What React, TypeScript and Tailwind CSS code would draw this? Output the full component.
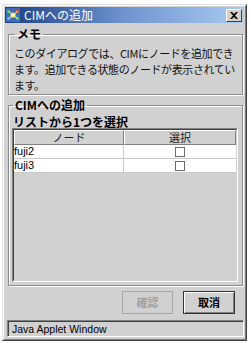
export default function App() {
  const jp = { fontFamily: '"Noto Sans CJK JP", sans-serif' };
  const rows = ["fuji2", "fuji3"];
  const memo = [
    "このダイアログでは、CIMにノードを追加でき",
    "ます。追加できる状態のノードが表示されてい",
    "ます。",
  ];

  return (
    <div className="w-[251px] h-[343px] bg-white overflow-hidden">
      {/* Window frame */}
      <div className="ml-[2px] mt-[4px] w-[245px] h-[337px] bg-[#d1d1d1] border border-t-[#e0e0e0] border-l-[#e0e0e0] border-r-[#404040] border-b-[#404040] flex flex-col">
        <div className="flex-1 flex flex-col border border-t-white border-l-white border-r-[#808080] border-b-[#808080] p-[1px]">
          {/* Title bar */}
          <div className="h-[16px] flex items-center bg-gradient-to-r from-[#1c3f86] via-[#6f94cf] to-[#a9cbf2] pl-[1px] pr-[2px]">
            <svg width="14" height="14" viewBox="0 0 16 16">
              <rect x="0" y="0" width="16" height="16" fill="#3d6bb5" />
              <circle cx="8" cy="8" r="3" fill="#f3e23a" />
              <circle cx="3" cy="4" r="2" fill="#4cc25a" />
              <circle cx="13" cy="4" r="2" fill="#e25a3a" />
              <circle cx="3" cy="12" r="2" fill="#5aa7e8" />
              <circle cx="13" cy="12" r="2" fill="#4cc25a" />
              <path d="M3 4 L8 8 L13 4 M3 12 L8 8 L13 12" stroke="#fff" strokeWidth="1" fill="none" />
            </svg>
            <span className="ml-[4px] text-[12px] leading-none text-white" style={jp}>
              CIMへの追加
            </span>
            <div className="ml-auto w-[16px] h-[13px] bg-[#d4d0c8] border border-t-white border-l-white border-r-[#404040] border-b-[#404040] flex items-center justify-center">
              <svg width="8" height="7" viewBox="0 0 8 7">
                <path d="M0 0 L2 0 L4 2 L6 0 L8 0 L5 3.5 L8 7 L6 7 L4 5 L2 7 L0 7 L3 3.5 Z" fill="#000" />
              </svg>
            </div>
          </div>

          {/* Body */}
          <div className="flex-1 flex flex-col pl-[3px] pr-[1px] pt-[4px]" style={jp}>
            <fieldset className="border border-[#8c8c8c] shadow-[1px_1px_0_#fff,inset_1px_1px_0_#fff] px-[5px] pb-[1px]">
              <legend className="ml-[1px] px-[2px] text-[12px] font-bold leading-[14px] text-black">メモ</legend>
              <div className="mt-[4px] text-[11px] leading-[16px] text-[#111] tracking-[-0.4px]">
                {memo.map((l) => (
                  <div key={l} className="whitespace-nowrap">
                    {l}
                  </div>
                ))}
              </div>
            </fieldset>

            <fieldset className="mt-[3px] flex-1 flex flex-col border border-[#8c8c8c] shadow-[1px_1px_0_#fff,inset_1px_1px_0_#fff] pl-[3px] pr-[4px] pb-[3px]">
              <legend className="ml-[1px] px-[2px] text-[12px] font-bold leading-[14px] text-black">CIMへの追加</legend>
              <div className="mt-[3px] ml-[1px] text-[12px] font-bold leading-[13px] text-black">リストから1つを選択</div>
              <div className="flex-1 border border-t-[#808080] border-l-[#808080] border-r-white border-b-white">
                <div className="h-full border border-t-[#404040] border-l-[#404040] border-r-[#d4d4d4] border-b-[#d4d4d4] bg-[#d1d1d1]">
                  <div className="flex h-[15px]">
                    <div className="w-[110px] border border-t-white border-l-white border-r-[#808080] border-b-[#808080] text-[11px] leading-[13px] text-center text-[#222]">
                      ノード
                    </div>
                    <div className="flex-1 border border-t-white border-l-white border-r-[#808080] border-b-[#808080] text-[11px] leading-[13px] text-center text-[#222]">
                      選択
                    </div>
                  </div>
                  {rows.map((r) => (
                    <div key={r} className="flex h-[14px] bg-white border-b border-[#c8c8c8]">
                      <div
                        className="w-[110px] border-r border-[#c8c8c8] text-[11px] leading-[13px] text-black"
                        style={{ fontFamily: '"Liberation Sans", sans-serif' }}
                      >
                        {r}
                      </div>
                      <div className="flex-1 flex items-center justify-center">
                        <div className="w-[10px] h-[10px] border border-[#6a6a6a] bg-white" />
                      </div>
                    </div>
                  ))}
                </div>
              </div>
            </fieldset>

            {/* Buttons */}
            <div className="flex justify-end gap-[10px] pt-[5px] pr-[8px] pb-[6px]">
              <div className="w-[51px] h-[23px] border border-[#a8a8a8] flex items-center justify-center text-[11px] font-bold text-[#a0a0a0]">
                確認
              </div>
              <div className="w-[52px] h-[23px] border border-[#333] shadow-[inset_1px_1px_0_#fff,inset_-1px_-1px_0_#808080] flex items-center justify-center text-[11px] font-bold text-black">
                取消
              </div>
            </div>
          </div>

          {/* Status bar */}
          <div className="ml-[2px] mb-[1px] h-[17px] border border-t-[#808080] border-l-[#808080] border-r-white border-b-white">
            <div
              className="h-full border-l border-t border-[#404040] text-[10.5px] leading-[14px] pl-[3px] text-black"
              style={{ fontFamily: '"Liberation Sans", sans-serif' }}
            >
              Java Applet Window
            </div>
          </div>
        </div>
      </div>
    </div>
  );
}
